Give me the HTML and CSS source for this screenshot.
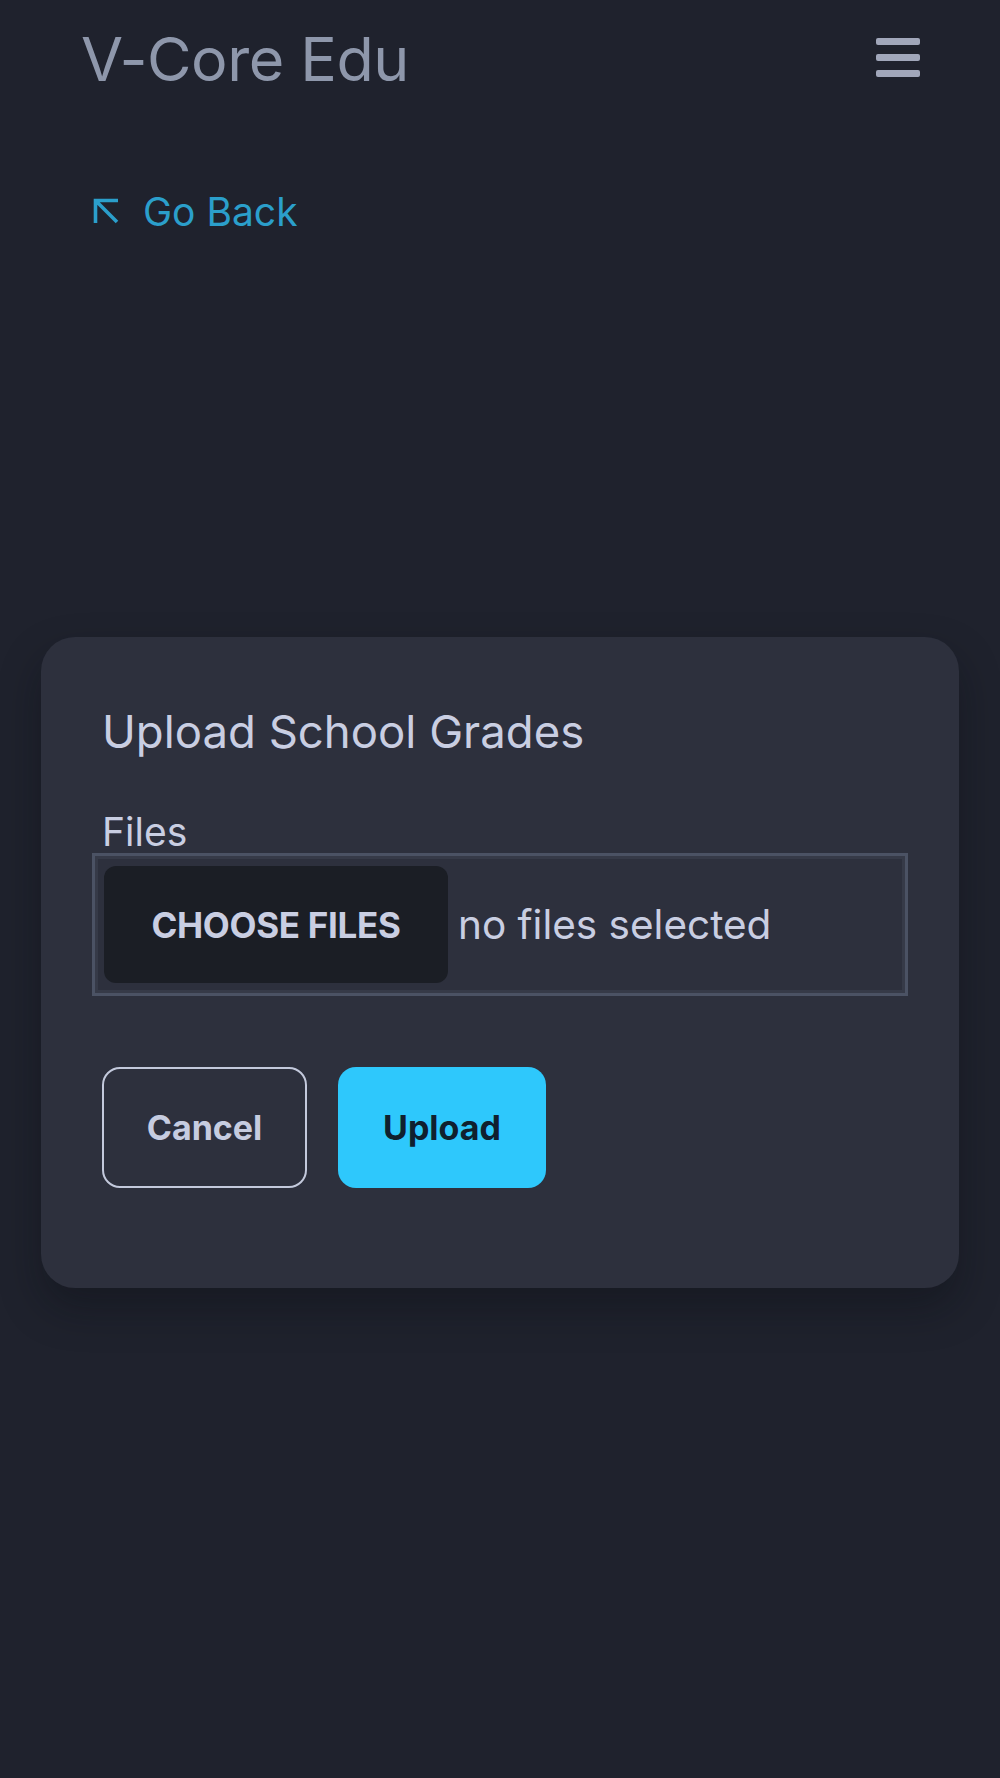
FILE: index.html
```html
<!DOCTYPE html>
<html lang="en">
<head>
<meta charset="utf-8">
<title>V-Core Edu</title>
<link rel="stylesheet" href="styles.css">
</head>
<body>
<header class="topbar">
  <div class="brand">V-Core Edu</div>
  <button class="menu" aria-label="Menu">
    <span></span><span></span><span></span>
  </button>
</header>
<nav class="back">
  <a class="back-link" href="#">
    <svg class="back-icon" viewBox="0 0 28 28" width="28" height="28" fill="none" stroke="currentColor" stroke-width="3.6" stroke-linecap="butt" stroke-linejoin="miter">
      <path d="M3.5 3.5L25 25M3.5 1.8V26M1.8 3.5H26"/>
    </svg>
    <span>Go Back</span>
  </a>
</nav>
<main class="stage">
  <section class="card">
    <h1 class="card-title">Upload School Grades</h1>
    <label class="field-label">Files</label>
    <div class="file-box">
      <span class="file-btn">CHOOSE FILES</span>
      <span class="file-status">no files selected</span>
    </div>
    <div class="actions">
      <button class="btn btn-outline">Cancel</button>
      <button class="btn btn-primary">Upload</button>
    </div>
  </section>
</main>
</body>
</html>
```
FILE: styles.css
```css
html, body {
  margin: 0;
  padding: 0;
}
body {
  background: #1f222d;
  font-family: Inter, "Noto Sans", sans-serif;
  min-height: 1778px;
}
.topbar {
  display: flex;
  align-items: center;
  justify-content: space-between;
  padding: 18px 80px 0 81px;
  height: 82px;
}
.brand {
  font-size: 61px;
  color: #8e97ab;
  font-weight: 400;
  letter-spacing: -0.5px;
  line-height: 1;
}
.menu {
  background: none;
  border: 0;
  padding: 0;
  display: flex;
  flex-direction: column;
  gap: 9px;
  margin-top: -4px;
}
.menu span {
  display: block;
  width: 44px;
  height: 7px;
  border-radius: 2px;
  background: #a1a7ba;
}
.back {
  padding: 88px 0 0 92px;
}
.back-link {
  display: inline-flex;
  align-items: center;
  gap: 23px;
  color: #2b9fcb;
  text-decoration: none;
  font-size: 39px;
}
.back-icon {
  color: #2b9fcb;
  margin-top: -2px;
}
.stage {
  padding: 402px 41px 0 41px;
}
.card {
  background: #2d303d;
  border-radius: 34px;
  padding: 65px 61px 100px 61px;
  box-shadow: 0 20px 40px rgba(10, 12, 18, 0.35);
}
.card-title {
  margin: 0;
  font-size: 45.5px;
  font-weight: 400;
  color: #c9cee2;
  line-height: 1.3;
}
.field-label {
  display: block;
  margin-top: 50px;
  font-size: 39px;
  color: #c9cee2;
  line-height: 42px;
}
.file-box {
  margin: 0 -10px;
  border: 3px solid #4b5264;
  box-shadow: inset 0 0 0 3px #363a48;
  display: flex;
  align-items: center;
  gap: 10px;
  padding: 10px 9px;
  height: 117px;
}
.file-btn {
  background: #1b1e25;
  border-radius: 12px;
  width: 344px;
  height: 117px;
  display: flex;
  align-items: center;
  justify-content: center;
  font-size: 35px;
  font-weight: 700;
  color: #c9cee2;
  letter-spacing: -0.3px;
}
.file-status {
  font-size: 40.5px;
  color: #c9cee2;
}
.actions {
  display: flex;
  gap: 31px;
  margin-top: 71px;
}
.btn {
  font-family: Inter, "Noto Sans", sans-serif;
  font-size: 34px;
  font-weight: 700;
  height: 121px;
  border-radius: 18px;
  cursor: pointer;
}
.btn-outline {
  width: 205px;
  background: transparent;
  border: 2px solid #c3c9dc;
  color: #c6cce0;
}
.btn-primary {
  width: 208px;
  background: #2ec8fc;
  border: 0;
  color: #10202e;
}
```
